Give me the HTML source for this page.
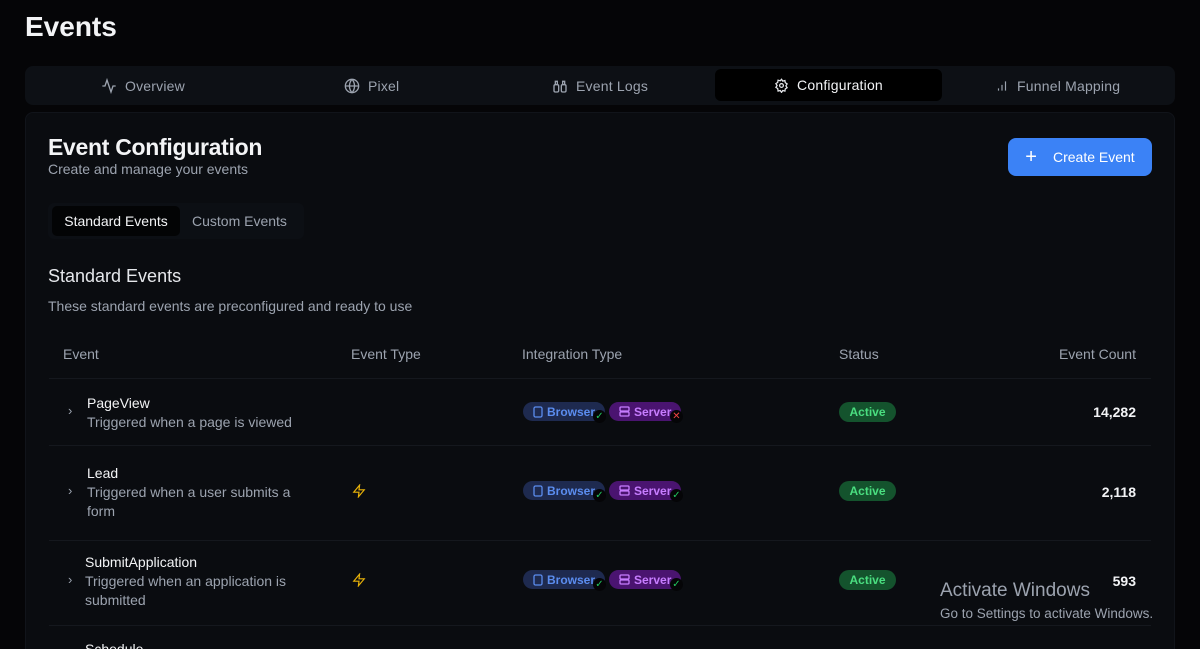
<!DOCTYPE html>
<html><head><style>
*{box-sizing:border-box;margin:0;padding:0}
html,body{width:1200px;height:649px;overflow:hidden}
body{background:#050507;font-family:"Liberation Sans",sans-serif;color:#e5e7eb;position:relative}
.abs{position:absolute}
h1{position:absolute;left:25px;top:11px;font-size:28px;font-weight:bold;color:#f3f4f6}
.tabs{left:25px;top:66px;width:1150px;height:39px;background:#0d1015;border-radius:8px}
.tab{position:absolute;top:0;height:39px;display:flex;align-items:center;gap:8px;font-size:14px;color:#9ca3af;letter-spacing:0.2px}
.tab.act{background:#000;border-radius:6px;top:3px;height:32px;color:#f3f4f6;justify-content:center}
.panel{left:25px;top:112px;width:1150px;height:560px;background:#0a0c10;border-radius:8px;border:1px solid #11141a}
.btn{left:1008px;top:138px;width:144px;height:38px;background:#3b82f6;border-radius:8px;color:#fff;font-size:14px;display:flex;align-items:center;justify-content:center;gap:16px}
.th{top:346px;font-size:14px;color:#9ca3af}
.line{left:49px;width:1102px;height:1px;background:#15181e}
.name{font-size:14px;color:#f3f4f6}
.desc{font-size:14px;color:#9ca3af;line-height:19px}
.pill{position:absolute;height:19px;border-radius:10px;font-size:12px;font-weight:bold;display:flex;align-items:center;gap:4px;padding-left:10px}
.br{background:#1e2a4f;color:#5b8def;width:82px}
.sv{background:#4a1470;color:#c77dff;width:72px}
.badge{position:absolute;width:13px;height:13px;border-radius:7px;background:#050507;font-size:10px;text-align:center;line-height:13px}
.status{position:absolute;left:839px;width:57px;height:20px;border-radius:10px;background:#14532d;color:#4ade80;font-size:12px;font-weight:bold;text-align:center;line-height:20px}
.cnt{position:absolute;right:64px;font-size:14px;font-weight:bold;color:#f3f4f6}
.chev{position:absolute;left:68px;color:#9ca3af;font-size:13px}
</style></head><body>
<h1>Events</h1>
<div class="abs tabs">
<div class="tab" style="left:76px"><svg width="16" height="16" viewBox="0 0 24 24" fill="none" stroke="#9ca3af" stroke-width="2"><path d="M22 12h-4l-3 9L9 3l-3 9H2"/></svg>Overview</div>
<div class="tab" style="left:319px"><svg width="16" height="16" viewBox="0 0 24 24" fill="none" stroke="#9ca3af" stroke-width="2"><circle cx="12" cy="12" r="10"/><path d="M2 12h20M12 2a15 15 0 010 20M12 2a15 15 0 000 20"/></svg>Pixel</div>
<div class="tab" style="left:527px"><svg width="16" height="16" viewBox="0 0 24 24" fill="none" stroke="#9ca3af" stroke-width="2"><rect x="3" y="10" width="7" height="11" rx="2"/><rect x="14" y="10" width="7" height="11" rx="2"/><path d="M5 10V5h3v5M16 10V5h3v5"/></svg>Event Logs</div>
<div class="tab act" style="left:690px;width:227px"><svg width="15" height="15" viewBox="0 0 24 24" fill="none" stroke="#e5e7eb" stroke-width="2"><circle cx="12" cy="12" r="3"/><path d="M12 2l2 3 3.5-1 .5 3.5 3 2-2 3 2 3-3 2-.5 3.5-3.5-1-2 3-2-3-3.5 1L6 17l-3-2 2-3-2-3 3-2 .5-3.5 3.5 1z"/></svg>Configuration</div>
<div class="tab" style="left:970px"><svg width="14" height="14" viewBox="0 0 24 24" fill="none" stroke="#9ca3af" stroke-width="2"><path d="M6 20v-4M12 20V10M18 20V4"/></svg>Funnel Mapping</div>
</div>
<div class="abs panel"></div>
<div class="abs" style="left:48px;top:134px;font-size:23px;font-weight:bold;color:#f3f4f6;letter-spacing:-0.3px">Event Configuration</div>
<div class="abs" style="left:48px;top:161px;font-size:14px;color:#9ca3af">Create and manage your events</div>
<div class="abs btn"><span style="font-size:20px;font-weight:300">+</span>Create Event</div>
<div class="abs" style="left:48px;top:203px;width:256px;height:36px;background:#0c0f14;border-radius:6px"></div>
<div class="abs" style="left:52px;top:206px;width:128px;height:30px;background:#030405;border-radius:5px;color:#f3f4f6;font-size:14px;text-align:center;line-height:30px">Standard Events</div>
<div class="abs" style="left:192px;top:213px;font-size:14px;color:#9ca3af">Custom Events</div>
<div class="abs" style="left:48px;top:266px;font-size:18px;color:#e5e7eb">Standard Events</div>
<div class="abs" style="left:48px;top:298px;font-size:14px;color:#9ca3af">These standard events are preconfigured and ready to use</div>
<div class="abs th" style="left:63px">Event</div>
<div class="abs th" style="left:351px">Event Type</div>
<div class="abs th" style="left:522px">Integration Type</div>
<div class="abs th" style="left:839px">Status</div>
<div class="abs th" style="right:64px">Event Count</div>
<div class="abs line" style="top:378px"></div>
<div class="abs line" style="top:445px"></div>
<div class="abs line" style="top:540px"></div>
<div class="abs line" style="top:625px"></div>

<!-- row1 -->
<div class="chev" style="top:403px">›</div>
<div class="abs name" style="left:87px;top:395px">PageView</div>
<div class="abs desc" style="left:87px;top:413px">Triggered when a page is viewed</div>
<div class="pill br" style="left:523px;top:402px"><svg width="10" height="12" viewBox="0 0 10 12" fill="none" stroke="#5b8def" stroke-width="1.3"><rect x="1" y="1" width="8" height="10" rx="1.5"/></svg>Browser</div><div class="badge" style="left:593px;top:410px;color:#22c55e">✓</div>
<div class="pill sv" style="left:609px;top:402px"><svg width="11" height="11" viewBox="0 0 11 11" fill="none" stroke="#c77dff" stroke-width="1.3"><rect x="1" y="1" width="9" height="4" rx="1"/><rect x="1" y="6" width="9" height="4" rx="1"/></svg>Server</div><div class="badge" style="left:670px;top:410px;color:#ef4444">✕</div>
<div class="status" style="top:402px">Active</div>
<div class="cnt" style="top:404px">14,282</div>

<!-- row2 -->
<div class="chev" style="top:483px">›</div>
<div class="abs name" style="left:87px;top:465px">Lead</div>
<div class="abs desc" style="left:87px;top:483px;width:230px">Triggered when a user submits a form</div>
<svg class="abs" style="left:352px;top:484px" width="14" height="14" viewBox="0 0 24 24" fill="none" stroke="#eab308" stroke-width="2"><path d="M13 2L3 14h9l-1 8 10-12h-9z"/></svg>
<div class="pill br" style="left:523px;top:481px"><svg width="10" height="12" viewBox="0 0 10 12" fill="none" stroke="#5b8def" stroke-width="1.3"><rect x="1" y="1" width="8" height="10" rx="1.5"/></svg>Browser</div><div class="badge" style="left:593px;top:489px;color:#22c55e">✓</div>
<div class="pill sv" style="left:609px;top:481px"><svg width="11" height="11" viewBox="0 0 11 11" fill="none" stroke="#c77dff" stroke-width="1.3"><rect x="1" y="1" width="9" height="4" rx="1"/><rect x="1" y="6" width="9" height="4" rx="1"/></svg>Server</div><div class="badge" style="left:670px;top:489px;color:#22c55e">✓</div>
<div class="status" style="top:481px">Active</div>
<div class="cnt" style="top:484px">2,118</div>

<!-- row3 -->
<div class="chev" style="top:572px">›</div>
<div class="abs name" style="left:85px;top:554px">SubmitApplication</div>
<div class="abs desc" style="left:85px;top:572px;width:230px">Triggered when an application is submitted</div>
<svg class="abs" style="left:352px;top:573px" width="14" height="14" viewBox="0 0 24 24" fill="none" stroke="#eab308" stroke-width="2"><path d="M13 2L3 14h9l-1 8 10-12h-9z"/></svg>
<div class="pill br" style="left:523px;top:570px"><svg width="10" height="12" viewBox="0 0 10 12" fill="none" stroke="#5b8def" stroke-width="1.3"><rect x="1" y="1" width="8" height="10" rx="1.5"/></svg>Browser</div><div class="badge" style="left:593px;top:578px;color:#22c55e">✓</div>
<div class="pill sv" style="left:609px;top:570px"><svg width="11" height="11" viewBox="0 0 11 11" fill="none" stroke="#c77dff" stroke-width="1.3"><rect x="1" y="1" width="9" height="4" rx="1"/><rect x="1" y="6" width="9" height="4" rx="1"/></svg>Server</div><div class="badge" style="left:670px;top:578px;color:#22c55e">✓</div>
<div class="status" style="top:570px">Active</div>
<div class="cnt" style="top:573px">593</div>

<div class="abs name" style="left:85px;top:641px">Schedule</div>

<div class="abs" style="left:940px;top:580px;font-size:19px;color:#9ca3af">Activate Windows</div>
<div class="abs" style="left:940px;top:606px;font-size:13.5px;color:#9ca3af">Go to Settings to activate Windows.</div>
</body></html>
